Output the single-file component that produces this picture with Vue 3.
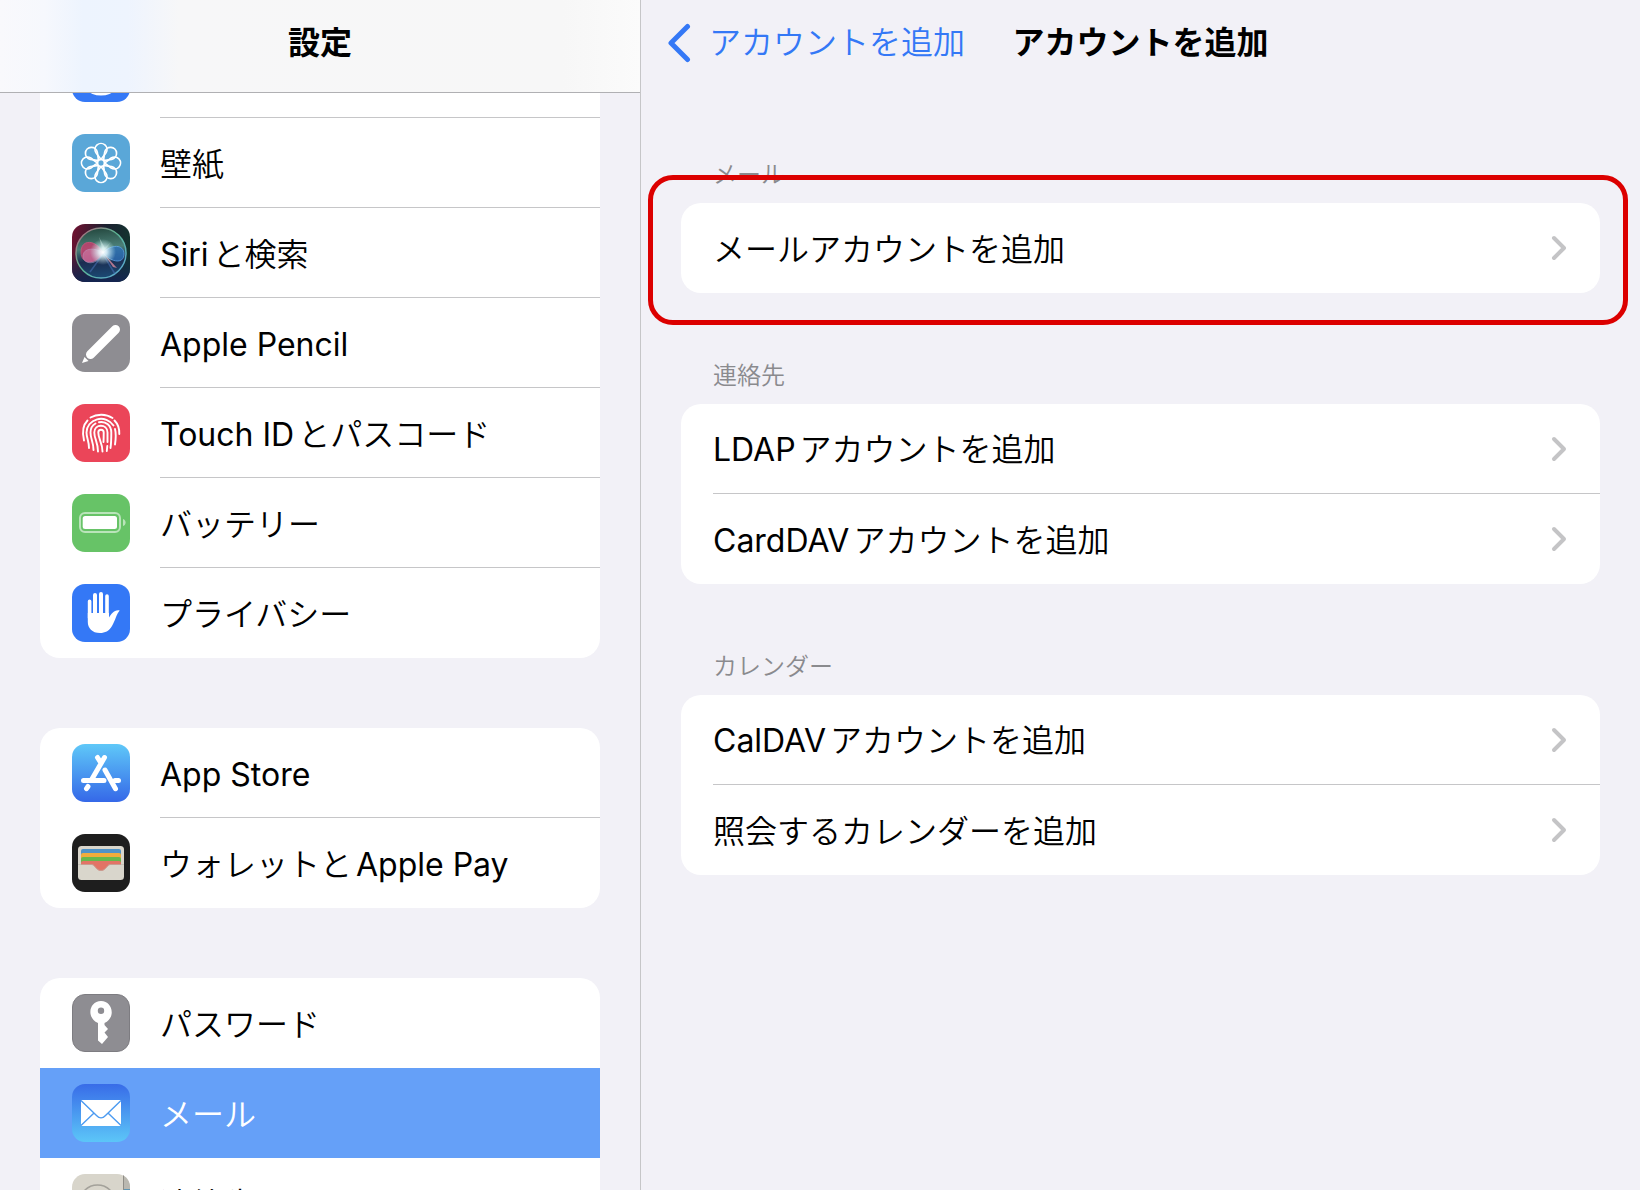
<template>
  <div class="settings">
    <aside class="sidebar">
      <header class="sidebar-header">
        <h1>設定</h1>
      </header>
      <nav class="menu">
        <div v-for="(group, i) in menu" :key="i" class="card">
          <a
            v-for="item in group"
            :key="item.icon"
            href="#"
            class="menu-item"
            :class="{ selected: item.icon === selected }"
          >
            <svg class="app-icon" viewBox="0 0 58 58" aria-hidden="true" v-html="icons[item.icon]"></svg>
            <span class="menu-label">{{ item.label }}</span>
          </a>
        </div>
      </nav>
    </aside>

    <main class="detail">
      <header class="detail-header">
        <button type="button" class="back">
          <svg class="back-icon" viewBox="0 0 24 40" aria-hidden="true">
            <path d="M20.5 3.5 4 20l16.5 16.5" />
          </svg>
          アカウントを追加
        </button>
        <h2>アカウントを追加</h2>
      </header>

      <section v-for="section in sections" :key="section.title">
        <h3>{{ section.title }}</h3>
        <div class="card" :class="{ marked: section.marked }">
          <a v-for="row in section.rows" :key="row" href="#" class="row">
            <span class="row-label">{{ row }}</span>
            <svg class="chevron" viewBox="0 0 16 26" aria-hidden="true">
              <path d="M3 3l10 10L3 23" />
            </svg>
          </a>
        </div>
      </section>
    </main>
  </div>
</template>

<script setup>
import { ref } from 'vue'

const selected = ref('mail')

const menu = [
  [
    { icon: 'accessibility', label: '' },
    { icon: 'wallpaper', label: '壁紙' },
    { icon: 'siri', label: 'Siriと検索' },
    { icon: 'pencil', label: 'Apple Pencil' },
    { icon: 'touchid', label: 'Touch IDとパスコード' },
    { icon: 'battery', label: 'バッテリー' },
    { icon: 'privacy', label: 'プライバシー' },
  ],
  [
    { icon: 'appstore', label: 'App Store' },
    { icon: 'wallet', label: 'ウォレットとApple Pay' },
  ],
  [
    { icon: 'password', label: 'パスワード' },
    { icon: 'mail', label: 'メール' },
    { icon: 'contacts', label: '連絡先' },
  ],
]

const sections = [
  { title: 'メール', rows: ['メールアカウントを追加'], marked: true },
  { title: '連絡先', rows: ['LDAPアカウントを追加', 'CardDAVアカウントを追加'] },
  { title: 'カレンダー', rows: ['CalDAVアカウントを追加', '照会するカレンダーを追加'] },
]

const tile = (fill) => `<rect width="58" height="58" rx="13" fill="${fill}"/>`

const petals = [0, 45, 90, 135, 180, 225, 270, 315]
  .map((a) => `<path transform="rotate(${a} 29 29)" d="M29 25.5 24 18.8A6 6 0 1 1 34 18.8z"/>`)
  .join('')

const icons = {
  accessibility: tile('#3478f6') + '<circle cx="29" cy="29" r="21" fill="none" stroke="#fff" stroke-width="3"/>',

  wallpaper: tile('#5aa7d8') + `
    <g fill="none" stroke="#fff" stroke-width="1.7" stroke-linejoin="round">
      ${petals}
      <circle cx="29" cy="29" r="3.5"/>
    </g>`,

  siri: `
    <defs>
      <linearGradient id="siri-bg" x1="0" y1=".3" x2="1" y2=".5">
        <stop offset="0" stop-color="#6b1230"/><stop offset=".5" stop-color="#1c2030"/><stop offset="1" stop-color="#12352f"/>
      </linearGradient>
      <linearGradient id="siri-low" x1="0" y1="0" x2="0" y2="1">
        <stop offset=".5" stop-color="#122a50" stop-opacity="0"/><stop offset="1" stop-color="#142450"/>
      </linearGradient>
      <linearGradient id="siri-orb" x1=".4" y1="0" x2=".5" y2="1">
        <stop offset="0" stop-color="#24483f"/><stop offset=".4" stop-color="#4c8078"/><stop offset=".65" stop-color="#1b2c50"/><stop offset="1" stop-color="#1b4a74"/>
      </linearGradient>
      <linearGradient id="siri-ring" x1="0" y1="0" x2="1" y2="1">
        <stop offset="0" stop-color="#b8607c"/><stop offset=".45" stop-color="#5cb592"/><stop offset="1" stop-color="#5aa6da"/>
      </linearGradient>
      <radialGradient id="siri-glow">
        <stop offset="0" stop-color="#fff"/><stop offset=".3" stop-color="#eafcff" stop-opacity=".85"/><stop offset="1" stop-color="#bfeef0" stop-opacity="0"/>
      </radialGradient>
    </defs>
    ${tile('url(#siri-bg)')}${tile('url(#siri-low)')}
    <circle cx="29" cy="29" r="25" fill="url(#siri-orb)" stroke="url(#siri-ring)" stroke-width="1.5"/>
    <path d="M31 29C24 15 9 15 9 28s14 13 22 1" fill="#d4376e" stroke="#e0507f" opacity=".75"/>
    <path d="M31 29C23 23 11 24 11 32s13 11 20-3" fill="#d58bb5" stroke="#c9b3dc" opacity=".5"/>
    <path d="M31 29c8-9 21-9 21 1s-12 9-21-1" fill="#2f72b8" stroke="#5fa8ee" opacity=".8"/>
    <path d="M31 30 18 48M31 30l12 20" stroke="#4d78c0" stroke-width="1.5" opacity=".5"/>
    <path d="m32 30 13 14-4-1z" fill="#d9889e" opacity=".8"/>
    <circle cx="31" cy="28" r="13" fill="url(#siri-glow)"/>
    <path d="M31 28 27 13l6 11 6-6z" fill="#e8fffa" opacity=".35"/>`,

  pencil: tile('#8e8d92') + `
    <path d="M18.5 40.5l25-25" stroke="#fff" stroke-width="9" stroke-linecap="round"/>
    <path d="M10 49l2.5-6 4 4z" fill="#fff"/>`,

  touchid: tile('#eb4559') + `
    <g fill="none" stroke="#fff" stroke-width="1.9" stroke-linecap="round">
      <path d="M18.5 13.5C25 9.7 34 9.7 40.5 14M15.5 16.5C11 21 10 28 12 36.5M42.5 16.5c3.5 3.5 5 8 4.8 13.5"/>
      <path d="M17 44C17 37 14.5 34 14.5 28.5a14.5 13.5 0 0 1 27-7M43 25c1.3 5 .8 10 0 15.5"/>
      <path d="M21.5 46C21.5 38 18.5 35 18.5 28.5c0-4 2-7.3 5-9M27 18.3c7-1.4 12.3 3.4 12.3 10.2 0 5-.1 11-.8 15.5"/>
      <path d="M26 47.5C26 38 22.3 35 22.3 28.5c0-9 13.2-9 13.2 0V38M35.3 42l-.5 5"/>
      <path d="M30.5 47.5C30.5 39 26.3 35 26.3 28.5c0-3.6 5.4-3.6 5.4 0 0 4.5 0 6.5-.2 9.5"/>
    </g>`,

  battery: tile('#67c367') + `
    <rect x="8" y="19" width="40" height="19" rx="5" fill="none" stroke="#fff" stroke-width="2" opacity=".55"/>
    <rect x="10.7" y="22" width="34.3" height="13" rx="2.5" fill="#fff"/>
    <path d="M51 25c3.5 1 3.5 6 0 7z" fill="#fff" opacity=".55"/>`,

  privacy: tile('#3478f6') + `
    <path d="M17.6 17.3V34M35 12V32" stroke="#fff" stroke-width="3.6" stroke-linecap="round"/>
    <path d="M23 11V30M29 10V30" stroke="#fff" stroke-width="4" stroke-linecap="round"/>
    <path d="M15.8 29H37v4.5C39.5 30 42 25.5 47.7 26.5 44.5 30 43.5 36 40 42c-3 5-7 7-12 7-8 0-12.2-5-12.2-11z" fill="#fff"/>`,

  appstore: `
    <defs>
      <linearGradient id="store-bg" x1="0" y1="0" x2="0" y2="1">
        <stop offset="0" stop-color="#5fc8f8"/><stop offset="1" stop-color="#3568e8"/>
      </linearGradient>
    </defs>
    ${tile('url(#store-bg)')}
    <g stroke="#fff" stroke-width="5" stroke-linecap="round">
      <path d="M25.5 13.5 29 19M32.5 13.5 20 35M16 42.5l-1.5 2.2M11.5 36.5H32M43 36.5h3.500"/>
      <path d="M33 26l10.5 18.7"/>
    </g>`,

  wallet: tile('#1e1e1e') + `
    <rect x="6" y="12" width="46" height="34" rx="3.5" fill="#d9d6cc"/>
    <path d="M9 31V17a2 2 0 0 1 2-2h36a2 2 0 0 1 2 2v14z" fill="#4f93c8"/>
    <path d="M9 31V21a2 2 0 0 1 2-2h36a2 2 0 0 1 2 2v10z" fill="#f0ac3c"/>
    <path d="M9 31v-6a2 2 0 0 1 2-2h36a2 2 0 0 1 2 2v6z" fill="#67b84c"/>
    <path d="M9 31v-2a2 2 0 0 1 2-2h36a2 2 0 0 1 2 2v2H38c-3 0-4 6-9 6s-6-6-9-6z" fill="#e27466"/>
    <path d="M6 30.5H20c3 0 4 6 9 6s6-6 9-6H52" fill="none" stroke="#b9b6ac" stroke-width=".6"/>`,

  password: `
    <rect x=".5" y=".5" width="57" height="57" rx="12.5" fill="#8e8d92" stroke="#7d7c81"/>
    <path d="M26 29C14 24 17 7 29 7s15 17 3.5 22v2l3.5 4-3.5 3.5 3.5 4.5-6 7-4-3.5z" fill="#fff"/>
    <circle cx="29" cy="16.7" r="3.2" fill="#8e8d92"/>`,

  mail: `
    <defs>
      <linearGradient id="mail-bg" x1="0" y1="0" x2="0" y2="1">
        <stop offset="0" stop-color="#386ce8"/><stop offset="1" stop-color="#5cc6f8"/>
      </linearGradient>
    </defs>
    ${tile('url(#mail-bg)')}
    <rect x="9" y="16" width="40" height="26" rx="1" fill="#fff"/>
    <path d="M9 16.5l15.5 15c3 3.2 6 3.2 9 0L49 16.5M9 41.5l12.5-12M49 41.5l-12.5-12" fill="none" stroke="#4c9bf1" stroke-width="1.4"/>`,

  contacts: `
    <path d="M13 0H45C52 0 58 6 58 13V58H0V13C0 6 6 0 13 0z" fill="#d8d5cb"/>
    <path d="M51 1.5C55 3.5 58 7.5 58 13v2h-7z" fill="#bab8b0"/>
    <path d="M51 15h7v20h-7z" fill="#5f96b4"/>
    <path d="M51.5 1.5V58" stroke="#8f8d87"/>
    <circle cx="25.5" cy="29" r="18" fill="none" stroke="#a3a19a" stroke-width="1.5"/>`,
}
</script>

<style>
body {
  margin: 0;
  background: #f2f1f7;
}
</style>

<style scoped>
.settings {
  display: grid;
  grid-template-columns: 16fr 25fr;
  height: 100vh;
  overflow: hidden;
  background: #f2f1f7;
  color: #000;
  font-family: Inter, 'Noto Sans CJK JP DemiLight', 'Noto Sans CJK JP', sans-serif;
  font-size: 32px;
  line-height: 48px;
  text-autospace: normal;
}

.settings * {
  box-sizing: border-box;
}

h1,
h2 {
  margin: 0;
  font-family: Inter, 'Noto Sans CJK JP', sans-serif;
  font-size: 32px;
  font-weight: 700;
}

a {
  color: inherit;
  text-decoration: none;
}

.card {
  position: relative;
  background: #fff;
  border-radius: 20px;
}

/* Sidebar */
.sidebar {
  min-height: 0;
  overflow: hidden;
}

.sidebar-header {
  position: relative;
  z-index: 1;
  display: flex;
  justify-content: center;
  height: 93px;
  padding-top: 19px;
  border-bottom: 1px solid #b0b0b3;
  background: linear-gradient(90deg, #f9f9fc 0%, #f6f8fd 7%, #edf4fe 13%, #eef4fe 20%, #f7f7f8 28%, #f7f7f7 88%, #fbfbfb 100%);
}

/* the list is scrolled partly under the header */
.menu {
  display: flex;
  flex-direction: column;
  gap: 70px;
  margin-top: -65px;
  padding: 0 40px;
}

.menu .card {
  overflow: hidden;
}

.menu-item {
  display: flex;
  align-items: center;
  gap: 30px;
  height: 90px;
  padding-left: 32px;
}

.app-icon {
  flex: none;
  width: 58px;
  height: 58px;
}

.menu-label {
  flex: 1;
  height: 90px;
  padding-top: 23px;
  border-bottom: 1px solid #c6c6c8;
}

.menu-item:last-child .menu-label,
.menu-item:has(+ .selected) .menu-label,
.selected .menu-label {
  border-bottom: 0;
}

.selected {
  background: #65a0f8;
  color: #fff;
}

/* Detail */
.detail {
  padding: 0 40px;
  border-left: 1px solid #c6c6c8;
}

.detail-header {
  display: grid;
  grid-template-columns: 1fr auto 1fr;
  height: 92px;
  padding-top: 19px;
}

.back {
  display: flex;
  align-items: center;
  justify-self: start;
  gap: 18px;
  height: 48px;
  margin-left: -14px;
  padding: 0;
  border: 0;
  background: none;
  color: #3478f6;
  font: inherit;
  white-space: nowrap;
}

.back-icon {
  width: 24px;
  height: 40px;
  fill: none;
  stroke: currentColor;
  stroke-width: 5;
  stroke-linecap: round;
  stroke-linejoin: round;
}

h3 {
  margin: 0;
  padding: 66px 32px 11px;
  color: #8a8a8e;
  font-size: 24px;
  font-weight: 400;
  line-height: 34px;
}

.row {
  display: flex;
  align-items: center;
  justify-content: space-between;
  height: 90px;
  margin-left: 32px;
  padding-right: 33px;
  border-bottom: 1px solid #c6c6c8;
}

.row:last-child {
  border-bottom: 0;
}

.row-label {
  padding-top: 3px;
}

.chevron {
  width: 16px;
  height: 26px;
  fill: none;
  stroke: #c4c4c6;
  stroke-width: 4;
  stroke-linecap: round;
  stroke-linejoin: round;
}

.marked::after {
  content: '';
  position: absolute;
  inset: -28px -28px -32px -33px;
  border: 5px solid #dc0000;
  border-radius: 25px;
  pointer-events: none;
}
</style>
